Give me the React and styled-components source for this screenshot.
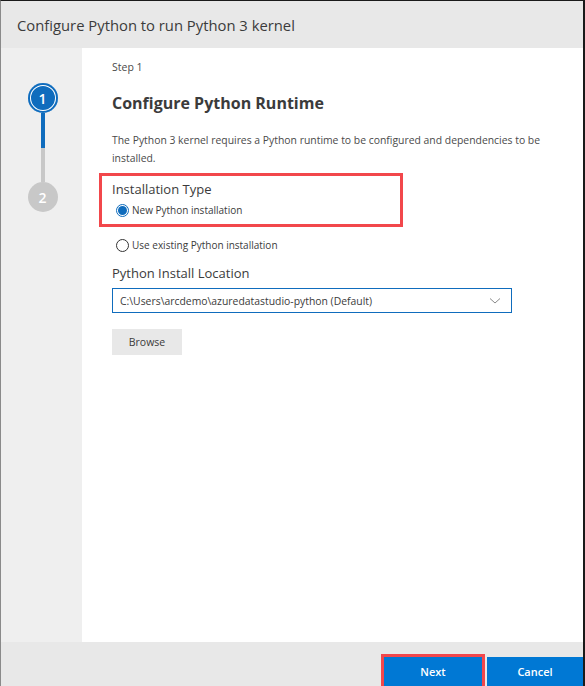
import React, { useState } from "react";
import styled, { createGlobalStyle } from "styled-components";

const GlobalStyle = createGlobalStyle`
  html, body {
    margin: 0;
    padding: 0;
    background: #ffffff;
  }
  * {
    box-sizing: border-box;
  }
`;

const Dialog = styled.div`
  display: flex;
  flex-direction: column;
  width: 585px;
  height: 686px;
  border-top: 1px solid #1a1a1a;
  border-right: 2px solid #1a1a1a;
  border-left: 1px solid #8a8a8a;
  font-family: "Open Sans", "Noto Sans", sans-serif;
  color: #323130;
  background: #ffffff;
`;

const Header = styled.div`
  height: 47px;
  flex-shrink: 0;
  background: #e8e8e8;
  display: flex;
  align-items: center;
  padding-left: 16px;
  font-size: 14.8px;
  color: #3b3b3b;
`;

const Body = styled.div`
  flex: 1;
  display: flex;
  min-height: 0;
`;

const Sidebar = styled.div`
  width: 81px;
  flex-shrink: 0;
  background: #efefef;
  display: flex;
  flex-direction: column;
  align-items: center;
  padding-top: 35px;
  padding-left: 2px;
`;

const StepCircle = styled.div`
  width: 30px;
  height: 30px;
  border-radius: 50%;
  display: flex;
  align-items: center;
  justify-content: center;
  font-size: 14px;
  font-weight: 600;
  color: #ffffff;
  background: ${(p) => (p.active ? "#0f6cbd" : "#c8c8c8")};
  box-shadow: ${(p) =>
    p.active ? "inset 0 0 0 2px #0f6cbd, inset 0 0 0 3px #ffffff" : "none"};
`;

const Connector = styled.div`
  width: 4px;
  height: 69px;
  background: linear-gradient(to bottom, #0f6cbd 0 50%, #c8c8c8 50% 100%);
`;

const Content = styled.div`
  flex: 1;
  padding: 11px 0 0 30px;
  display: flex;
  flex-direction: column;
  align-items: flex-start;
`;

const StepLabel = styled.div`
  font-size: 10.5px;
  color: #4a4a4a;
  line-height: 16px;
`;

const Title = styled.h2`
  margin: 16px 0 0;
  font-size: 16px;
  font-weight: 700;
  color: #3b3b3b;
  line-height: 24px;
`;

const Description = styled.p`
  margin: 16px 0 0;
  font-size: 10.4px;
  line-height: 18px;
  color: #4a4a4a;
  width: 440px;
`;

const Highlight = styled.div`
  margin: 6px 0 0 -13px;
  width: 304px;
  padding: 3px 10px 6px 10px;
  border: 3px solid #f2474b;
`;

const FieldLabel = styled.div`
  font-size: 13px;
  color: #3b3b3b;
  line-height: 20px;
  margin-top: ${(p) => p.top || 0}px;
`;

const RadioRow = styled.label`
  display: flex;
  align-items: center;
  gap: 3px;
  font-size: 10px;
  color: #3b3b3b;
  margin-top: ${(p) => p.top || 0}px;
  padding-left: 4px;
  line-height: 16px;
  cursor: pointer;
`;

const RadioDot = styled.span`
  width: 13px;
  height: 13px;
  border-radius: 50%;
  border: 1px solid ${(p) => (p.checked ? "#0f6cbd" : "#333333")};
  display: inline-flex;
  align-items: center;
  justify-content: center;
  background: #ffffff;

  &::after {
    content: "";
    width: 9px;
    height: 9px;
    border-radius: 50%;
    background: ${(p) => (p.checked ? "#0f6cbd" : "transparent")};
  }
`;

const Select = styled.div`
  margin-top: 5px;
  width: 400px;
  height: 25px;
  border: 1px solid #0f6cbd;
  display: flex;
  align-items: center;
  justify-content: space-between;
  padding: 0 10px 0 7px;
  font-size: 10.4px;
  color: #3b3b3b;
`;

const SecondaryButton = styled.button`
  margin-top: 16px;
  width: 70px;
  height: 26px;
  border: none;
  background: #e8e8e8;
  font-family: inherit;
  font-size: 10.5px;
  color: #3b3b3b;
`;

const Footer = styled.div`
  height: 44px;
  flex-shrink: 0;
  background: #e8e8e8;
  display: flex;
  justify-content: flex-end;
  align-items: flex-end;
`;

const PrimaryButton = styled.button`
  width: ${(p) => p.width}px;
  height: 29px;
  border: none;
  background: #0078d4;
  color: #ffffff;
  font-family: inherit;
  font-size: 11px;
  font-weight: 600;
  margin-left: ${(p) => p.gap || 0}px;
`;

const NextWrap = styled.div`
  border: 3px solid #f2474b;
  border-bottom: none;
  margin-right: 1px;
  display: flex;
`;

function Chevron() {
  return (
    <svg width="12" height="8" viewBox="0 0 12 8" fill="none">
      <path d="M1 1.5 L6 6 L11 1.5" stroke="#8a8a8a" strokeWidth="1" />
    </svg>
  );
}

export default function App() {
  const [installType, setInstallType] = useState("new");

  return (
    <>
      <GlobalStyle />
      <Dialog>
        <Header>Configure Python to run Python 3 kernel</Header>
        <Body>
          <Sidebar>
            <StepCircle active>1</StepCircle>
            <Connector />
            <StepCircle>2</StepCircle>
          </Sidebar>
          <Content>
            <StepLabel>Step 1</StepLabel>
            <Title>Configure Python Runtime</Title>
            <Description>
              The Python 3 kernel requires a Python runtime to be configured and
              dependencies to be installed.
            </Description>
            <Highlight>
              <FieldLabel>Installation Type</FieldLabel>
              <RadioRow top={3} onClick={() => setInstallType("new")}>
                <RadioDot checked={installType === "new"} />
                New Python installation
              </RadioRow>
            </Highlight>
            <RadioRow top={10} onClick={() => setInstallType("existing")}>
              <RadioDot checked={installType === "existing"} />
              Use existing Python installation
            </RadioRow>
            <FieldLabel top={10}>Python Install Location</FieldLabel>
            <Select>
              <span>C:\Users\arcdemo\azuredatastudio-python (Default)</span>
              <Chevron />
            </Select>
            <SecondaryButton>Browse</SecondaryButton>
          </Content>
        </Body>
        <Footer>
          <NextWrap>
            <PrimaryButton width={98}>Next</PrimaryButton>
          </NextWrap>
          <PrimaryButton width={96} gap={1}>
            Cancel
          </PrimaryButton>
        </Footer>
      </Dialog>
    </>
  );
}
